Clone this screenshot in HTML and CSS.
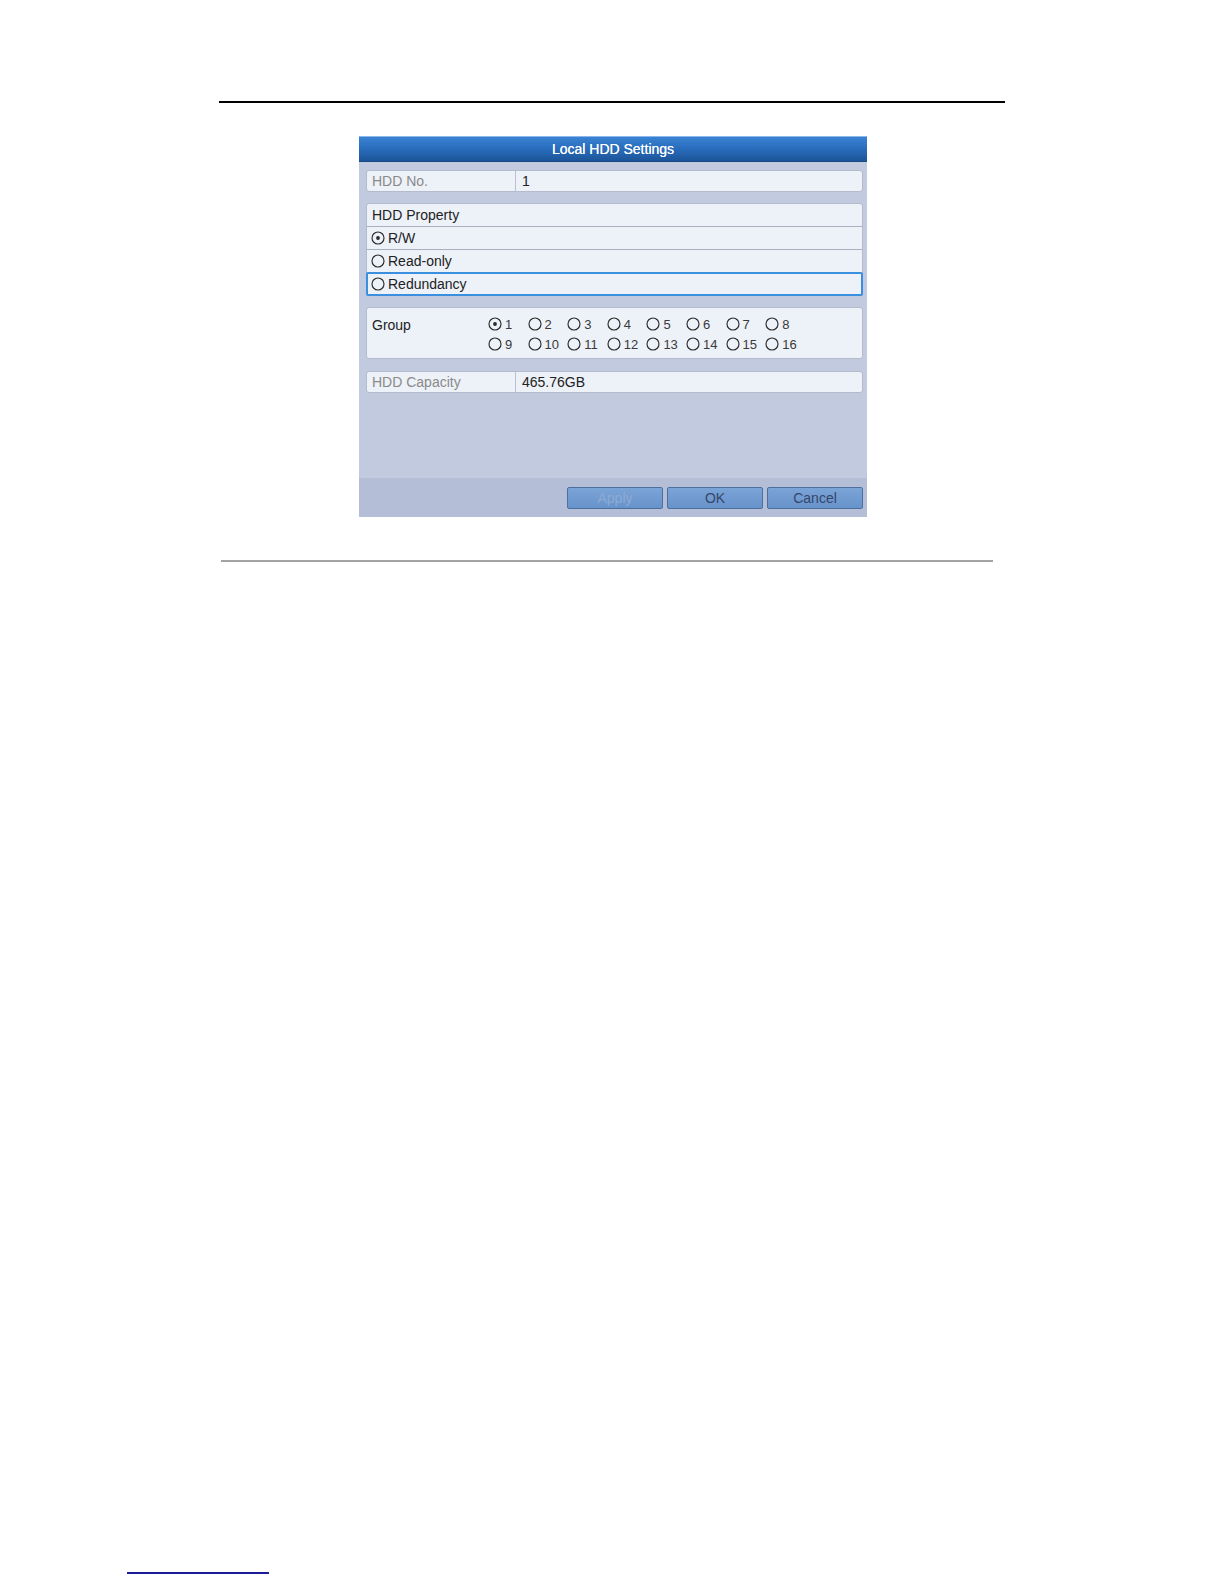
FILE: index.html
```html
<!DOCTYPE html>
<html lang="en">
<head>
<meta charset="utf-8">
<title>Local HDD Settings</title>
<link rel="stylesheet" href="styles.css">
</head>
<body>
<div class="page">
  <div class="topline"></div>

  <div class="dialog">
    <div class="header">Local HDD Settings</div>
    <div class="body">
      <div class="field">
        <div class="label muted">HDD No.</div>
        <div class="value">1</div>
      </div>

      <div class="box property">
        <div class="prow head">HDD Property</div>
        <div class="prow">
          <svg class="radio" viewBox="0 0 14 14"><circle cx="7" cy="7" r="6"/><circle class="dot" cx="7" cy="7" r="1.9"/></svg>
          <span>R/W</span>
        </div>
        <div class="prow">
          <svg class="radio" viewBox="0 0 14 14"><circle cx="7" cy="7" r="6"/></svg>
          <span>Read-only</span>
        </div>
        <div class="prow focus">
          <svg class="radio" viewBox="0 0 14 14"><circle cx="7" cy="7" r="6"/></svg>
          <span>Redundancy</span>
        </div>
      </div>

      <div class="box group">
        <div class="glabel">Group</div>
        <div class="grid">
          <div class="opt"><svg class="radio" viewBox="0 0 14 14"><circle cx="7" cy="7" r="6"/><circle class="dot" cx="7" cy="7" r="1.9"/></svg><span>1</span></div>
          <div class="opt"><svg class="radio" viewBox="0 0 14 14"><circle cx="7" cy="7" r="6"/></svg><span>2</span></div>
          <div class="opt"><svg class="radio" viewBox="0 0 14 14"><circle cx="7" cy="7" r="6"/></svg><span>3</span></div>
          <div class="opt"><svg class="radio" viewBox="0 0 14 14"><circle cx="7" cy="7" r="6"/></svg><span>4</span></div>
          <div class="opt"><svg class="radio" viewBox="0 0 14 14"><circle cx="7" cy="7" r="6"/></svg><span>5</span></div>
          <div class="opt"><svg class="radio" viewBox="0 0 14 14"><circle cx="7" cy="7" r="6"/></svg><span>6</span></div>
          <div class="opt"><svg class="radio" viewBox="0 0 14 14"><circle cx="7" cy="7" r="6"/></svg><span>7</span></div>
          <div class="opt"><svg class="radio" viewBox="0 0 14 14"><circle cx="7" cy="7" r="6"/></svg><span>8</span></div>
          <div class="opt"><svg class="radio" viewBox="0 0 14 14"><circle cx="7" cy="7" r="6"/></svg><span>9</span></div>
          <div class="opt"><svg class="radio" viewBox="0 0 14 14"><circle cx="7" cy="7" r="6"/></svg><span>10</span></div>
          <div class="opt"><svg class="radio" viewBox="0 0 14 14"><circle cx="7" cy="7" r="6"/></svg><span>11</span></div>
          <div class="opt"><svg class="radio" viewBox="0 0 14 14"><circle cx="7" cy="7" r="6"/></svg><span>12</span></div>
          <div class="opt"><svg class="radio" viewBox="0 0 14 14"><circle cx="7" cy="7" r="6"/></svg><span>13</span></div>
          <div class="opt"><svg class="radio" viewBox="0 0 14 14"><circle cx="7" cy="7" r="6"/></svg><span>14</span></div>
          <div class="opt"><svg class="radio" viewBox="0 0 14 14"><circle cx="7" cy="7" r="6"/></svg><span>15</span></div>
          <div class="opt"><svg class="radio" viewBox="0 0 14 14"><circle cx="7" cy="7" r="6"/></svg><span>16</span></div>
        </div>
      </div>

      <div class="field capacity">
        <div class="label muted">HDD Capacity</div>
        <div class="value">465.76GB</div>
      </div>
    </div>
    <div class="footer">
      <div class="btn disabled">Apply</div>
      <div class="btn">OK</div>
      <div class="btn">Cancel</div>
    </div>
  </div>

  <div class="sep"></div>
  <div class="link"></div>
</div>
</body>
</html>
```

FILE: styles.css
```css
html, body {
  margin: 0;
  padding: 0;
  background: #ffffff;
}

body {
  font-family: "Liberation Sans", Arial, sans-serif;
  color: #222;
}

.page {
  padding-top: 101px;
}

.topline {
  margin-left: 219px;
  width: 786px;
  height: 2px;
  background: #000;
}

.dialog {
  margin: 33px 0 0 359px;
  width: 508px;
}

.header {
  height: 26px;
  box-sizing: border-box;
  border-top: 1px solid #8ab8ea;
  border-bottom: 1px solid #174a86;
  background: linear-gradient(#3a82d3, #2a6ebf 45%, #1c5598);
  color: #fff;
  font-size: 14px;
  line-height: 24px;
  text-align: center;
  text-shadow: 0 0 0.6px #fff;
}

.body {
  height: 316px;
  box-sizing: border-box;
  background: #c2cadf;
  padding: 8px 4px 0 7px;
}

.field {
  display: flex;
  height: 22px;
  box-sizing: border-box;
  border: 1px solid #b3bbcc;
  border-radius: 3px;
  background: #edf1f8;
  font-size: 14px;
  line-height: 20px;
}

.field .label {
  width: 149px;
  box-sizing: border-box;
  padding-left: 5px;
  border-right: 1px solid #b9c0cf;
}

.field .value {
  padding-left: 6px;
  color: #222;
}

.muted {
  color: #8a8a8a;
}

.box {
  border: 1px solid #b3bbcc;
  border-radius: 3px;
  background: #edf1f8;
}

.property {
  margin-top: 11px;
}

.prow {
  display: flex;
  align-items: center;
  height: 23px;
  box-sizing: border-box;
  padding-left: 4px;
  font-size: 14px;
  border-top: 1px solid #a8afbf;
}

.prow.head {
  border-top: none;
  height: 22px;
  padding-left: 5px;
}

.prow.focus {
  height: 24px;
  margin: 0 -1px -1px -1px;
  border: 2px solid #3a8fdf;
  border-radius: 2px;
  padding-left: 3px;
}

.radio {
  width: 14px;
  height: 14px;
  flex: none;
  margin-right: 3px;
}

.radio circle {
  fill: none;
  stroke: #2a2a2a;
  stroke-width: 1.15;
}

.radio circle.dot {
  fill: #2a2a2a;
  stroke: none;
}

.group {
  margin-top: 11px;
  height: 52px;
  box-sizing: border-box;
  display: flex;
  padding-top: 6px;
}

.glabel {
  width: 116px;
  padding-left: 5px;
  font-size: 14px;
  line-height: 22px;
}

.grid {
  display: grid;
  grid-template-columns: repeat(8, 39.6px);
  grid-auto-rows: 20px;
}

.opt {
  display: flex;
  align-items: center;
  font-size: 13px;
  color: #3a3a3a;
}

.capacity {
  margin-top: 12px;
  height: 22px;
}

.footer {
  height: 39px;
  box-sizing: border-box;
  background: #b4bfd7;
  display: flex;
  justify-content: flex-end;
  gap: 4px;
  padding: 9px 4px 0 0;
}

.btn {
  width: 96px;
  height: 22px;
  box-sizing: border-box;
  border: 1px solid #4d6f9f;
  border-radius: 2px;
  background: linear-gradient(#7ba4d7, #6793cb);
  color: #34466a;
  font-size: 14px;
  line-height: 20px;
  text-align: center;
}

.btn.disabled {
  color: #8eaad2;
}

.sep {
  margin: 43px 0 0 221px;
  width: 772px;
  height: 2px;
  background: #a3a3a3;
}

.link {
  margin: 1010px 0 0 127px;
  width: 142px;
  height: 2px;
  background: #1c1c9a;
}
```
